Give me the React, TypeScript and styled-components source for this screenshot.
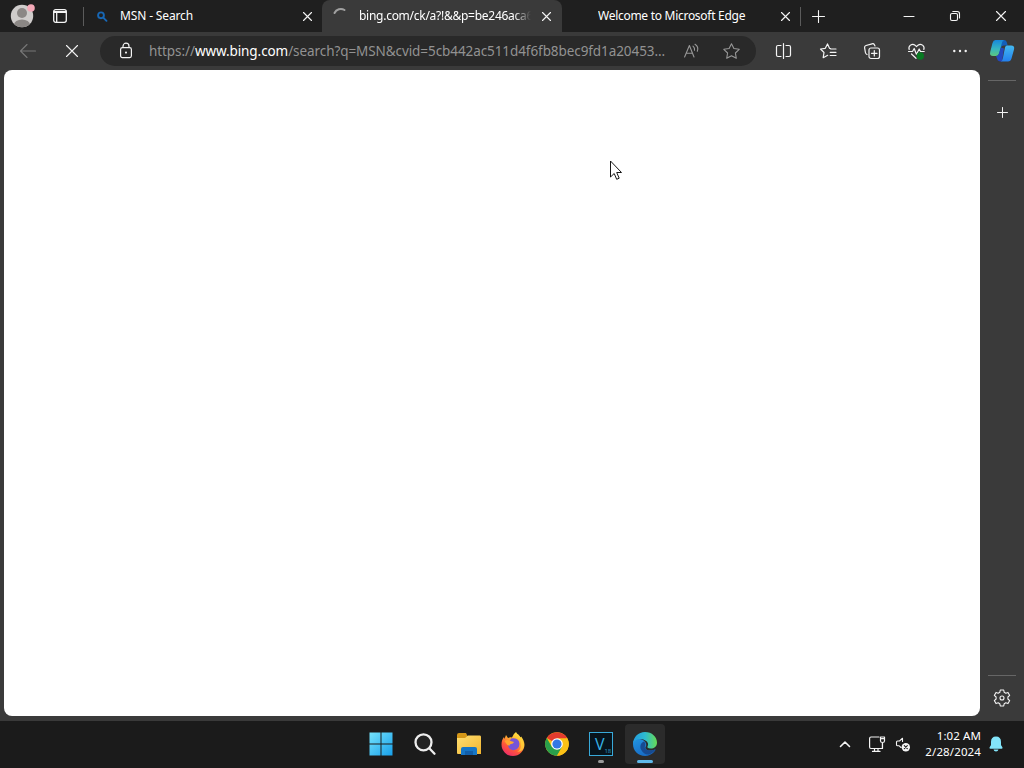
import React from "react";
import styled, { createGlobalStyle } from "styled-components";

const GlobalStyle = createGlobalStyle`
  * { box-sizing: border-box; }
  html, body { margin: 0; padding: 0; overflow: hidden; }
  body { background: #1b1b1b; font-family: "Noto Sans", "Open Sans", sans-serif; }
`;

const Desktop = styled.div`
  position: relative;
  width: 1024px;
  height: 768px;
  display: flex;
  flex-direction: column;
  overflow: hidden;
  background: #3a3a3a;
`;

const TitleBar = styled.header`
  height: 32px;
  display: flex;
  align-items: center;
  background: #1f1f1f;
`;

const Slot = styled.div<{ $w: number }>`
  width: ${(p) => p.$w}px;
  height: 100%;
  flex: none;
  display: flex;
  align-items: center;
  justify-content: center;
`;

const Icon = styled.svg<{ $color?: string; $stroke?: number }>`
  flex: none;
  display: block;
  overflow: visible;
  fill: none;
  stroke: ${(p) => p.$color ?? "#f4f4f4"};
  stroke-width: ${(p) => p.$stroke ?? 1.1};
  stroke-linecap: round;
  stroke-linejoin: round;
`;

const Logo = styled.svg`
  flex: none;
  display: block;
  overflow: visible;
`;

const Divider = styled.span`
  width: 1px;
  height: 19px;
  flex: none;
  background: #5b5b5b;
`;

const Tab = styled.div<{ $w: number; $active?: boolean }>`
  width: ${(p) => p.$w}px;
  height: 32px;
  flex: none;
  display: flex;
  align-items: center;
  background: ${(p) => (p.$active ? "#3a3a3a" : "transparent")};
  border-radius: ${(p) => (p.$active ? "8px 8px 0 0" : "0")};
`;

const TabTitle = styled.span<{ $w: number; $spacing: number; $fade?: boolean }>`
  width: ${(p) => p.$w}px;
  flex: none;
  overflow: hidden;
  white-space: nowrap;
  font-size: 12px;
  line-height: 18px;
  letter-spacing: ${(p) => p.$spacing}px;
  color: #fff;
  mask-image: ${(p) =>
    p.$fade ? "linear-gradient(90deg, #000 90%, transparent)" : "none"};
`;

const Toolbar = styled.nav`
  height: 38px;
  display: flex;
  align-items: center;
  background: #3a3a3a;
`;

const AddressBar = styled.div`
  width: 656px;
  height: 30px;
  flex: none;
  display: flex;
  align-items: center;
  padding-left: 15px;
  border-radius: 15px;
  background: #292929;
`;

const Url = styled.span`
  width: 522px;
  padding-left: 12px;
  flex: none;
  white-space: nowrap;
  font-size: 13.5px;
  line-height: 20px;
  letter-spacing: -0.08px;
  color: #929292;
`;

const Host = styled.span`
  color: #fff;
`;

const Body = styled.main`
  height: 651px;
  display: flex;
  padding: 0 0 5px 4px;
`;

const Page = styled.section`
  width: 976px;
  height: 646px;
  border-radius: 8px;
  background: #fff;
`;

const Sidebar = styled.aside`
  width: 44px;
  display: flex;
  flex-direction: column;
  align-items: center;
  padding-top: 10px;
`;

const Rule = styled.span`
  width: 28px;
  height: 1px;
  flex: none;
  background: #666;
`;

const SideButton = styled.div<{ $h: number; $drop?: number }>`
  height: ${(p) => p.$h}px;
  padding-top: ${(p) => p.$drop ?? 0}px;
  display: flex;
  align-items: center;
`;

const Spacer = styled.div`
  flex: 1;
`;

const Taskbar = styled.footer`
  height: 47px;
  display: flex;
  align-items: center;
  padding: 0 0 1px 359px;
  background: #1b1b1b;
`;

const TaskButton = styled.div<{ $active?: boolean }>`
  position: relative;
  width: 40px;
  height: 40px;
  margin: 0 2px;
  flex: none;
  display: flex;
  align-items: center;
  justify-content: center;
  border-radius: 4px;
  background: ${(p) => (p.$active ? "#2b2b2b" : "transparent")};
`;

const Running = styled.span<{ $active?: boolean }>`
  position: absolute;
  bottom: 1px;
  left: 50%;
  width: ${(p) => (p.$active ? 16 : 6)}px;
  height: 3px;
  border-radius: 2px;
  transform: translateX(-50%);
  background: ${(p) => (p.$active ? "#5fb9ea" : "#9a9a9a")};
`;

const Clock = styled.div`
  width: 66px;
  flex: none;
  text-align: right;
  white-space: nowrap;
  font-size: 11.5px;
  line-height: 16px;
  letter-spacing: -0.05px;
  color: #fff;
`;

const ClockLine = styled.div<{ $spacing: number }>`
  letter-spacing: ${(p) => p.$spacing}px;
`;

const Pointer = styled.svg`
  position: absolute;
  left: 610px;
  top: 160px;
`;

const Cross = ({ size, color }: { size: number; color?: string }) => (
  <Icon width={size} height={size} viewBox={`0 0 ${size} ${size}`} $color={color}>
    <path d={`M.5 .5L${size - 0.5} ${size - 0.5}M${size - 0.5} .5L.5 ${size - 0.5}`} />
  </Icon>
);

const Plus = ({ size, stroke }: { size: number; stroke?: number }) => (
  <Icon width={size} height={size} viewBox={`0 0 ${size} ${size}`} $stroke={stroke}>
    <path d={`M${size / 2} .5V${size - 0.5}M.5 ${size / 2}H${size - 0.5}`} />
  </Icon>
);

const Avatar = () => (
  <Logo width="26" height="26" viewBox="0 0 26 26">
    <clipPath id="face"><circle cx="13" cy="13" r="11.2" /></clipPath>
    <circle cx="13" cy="13" r="11.2" fill="#cfcccb" />
    <g clipPath="url(#face)" fill="#8b8785">
      <circle cx="13" cy="10" r="5" />
      <ellipse cx="13" cy="22" rx="8" ry="5.500" />
    </g>
    <circle cx="22" cy="5" r="3.8" fill="#f4a9b8" />
  </Logo>
);

const CopilotMark = () => (
  <Logo width="26" height="24" viewBox="0 0 26 24">
    <defs>
      <linearGradient id="cpA" x1="0" y1="0" x2="0" y2="1">
        <stop offset="0" stopColor="#1787dc" />
        <stop offset=".55" stopColor="#36b5c1" />
        <stop offset="1" stopColor="#5cc67d" />
      </linearGradient>
      <linearGradient id="cpB" x1="0" y1="0" x2="0" y2="1">
        <stop offset="0" stopColor="#43b9f0" />
        <stop offset="1" stopColor="#2380ee" />
      </linearGradient>
    </defs>
    <path d="M12 1h3q2 0 2.700 2l1 3.500h-4q-2 0-2.700 2L10 17l-3-7z" fill="#135fba" />
    <path d="M6.500 1H15q-1.500.5-2 2.500L10 14.500Q9.300 17 7 17H4Q.2 17 1.200 13L3.500 4q.8-3 3-3z" fill="url(#cpA)" />
    <path d="M7 17q2 0 3-2.500l2-6 3 1-2 13q-4 0-4.600-2z" fill="#2448bd" />
    <path d="M18 6.500h4q4 0 3 4l-2.500 9q-.8 3-3.500 3h-7q1.200-.7 1.800-3L16 8.500q.5-2 2-2z" fill="url(#cpB)" />
  </Logo>
);

const WindowsMark = () => (
  <Logo width="24" height="24" viewBox="0 0 24 24">
    <defs>
      <linearGradient id="win" gradientUnits="userSpaceOnUse" x1="0" y1="0" x2="24" y2="24">
        <stop stopColor="#78e5fc" />
        <stop offset="1" stopColor="#159eea" />
      </linearGradient>
    </defs>
    <path d="M.5.5h11v11H.5zM12.500.5h11v11h-11zM.5 12.500h11v11H.5zM12.500 12.500h11v11h-11z" fill="url(#win)" />
  </Logo>
);

const FolderMark = () => (
  <Logo width="24" height="24" viewBox="0 0 24 24">
    <defs>
      <linearGradient id="fold" x2="1" y2="1">
        <stop stopColor="#ffdf72" />
        <stop offset="1" stopColor="#f2b52f" />
      </linearGradient>
    </defs>
    <path d="M0 3q0-2 2-2h7l1.500 3H20v4H0z" fill="#d59717" />
    <path d="M0 6h8l3-2.500h12q1 0 1 1.500V22H1q-1 0-1-1z" fill="url(#fold)" />
    <path d="M4 23v-6q0-2 2-2h12q2 0 2 2v6z" fill="#1676c6" />
    <path d="M8 19h8v4H8z" fill="#125ea8" />
  </Logo>
);

const FirefoxMark = () => (
  <Logo width="24" height="24" viewBox="0 0 24 24">
    <defs>
      <linearGradient id="fox" x1=".8" y1="0" x2=".25" y2="1">
        <stop stopColor="#fff04a" />
        <stop offset=".35" stopColor="#ffb32e" />
        <stop offset=".67" stopColor="#ff5839" />
        <stop offset="1" stopColor="#ea286d" />
      </linearGradient>
    </defs>
    <path d="M15 0c1 2 3.500 3.500 4.500 5.500l.7-1C22 7 23.500 10 23.500 13A11.500 11.500 0 0 1 12 24 11.500 11.500 0 0 1 .5 12.500C.5 9 1.500 7 3 5l.5 2L5 3l2 3q2-1 4-.5Q12 2 15 0z" fill="url(#fox)" />
    <path d="M10 6.500q6-1 8 3 1.500 5-2 7.500-4 2.500-7.500-.5-2.500-3-.5-6z" fill="#7654d8" />
    <path d="M3.500 9q3-2 6 0l3.500 1q-.7 2-3 2-1.500.4-1.500 1.700-2.500-.4-3.500-2.500z" fill="#ffa62e" />
    <path d="M15 2q6 4 5 12-.5 4-4 6 8-1 7-8l-3-6-3-4z" fill="#ffd33a" opacity=".7" />
  </Logo>
);

const ChromeMark = () => (
  <Logo width="24" height="24" viewBox="0 0 24 24">
    <circle cx="12" cy="12" r="11.8" fill="#fbc116" />
    <path d="M12 12L1.800 6A11.800 11.800 0 0 1 22.200 6z" fill="#e33b2e" />
    <path d="M1.800 6A11.800 11.800 0 0 0 12 23.800L17.100 15 12 12 6.900 15z" fill="#29a04b" />
    <path d="M12 6.200H22.300A11.800 11.800 0 0 1 12 23.800L17.100 15z" fill="#fbc116" />
    <circle cx="12" cy="12" r="5.8" fill="#fff" />
    <circle cx="12" cy="12" r="4.6" fill="#3478e5" />
  </Logo>
);

const VegasTile = styled.div`
  width: 24px;
  height: 24px;
  display: flex;
  align-items: flex-end;
  padding-left: 5px;
  border: 1.5px solid #38a9d9;
  background: #08141c;
  color: #37b5e8;
  font-family: "Open Sans", sans-serif;
  font-size: 16px;
  line-height: 22px;
`;

const VegasVersion = styled.span`
  font-size: 6px;
  line-height: 8px;
  letter-spacing: -0.3px;
  color: #299fcd;
`;

const EdgeMark = () => (
  <Logo width="24" height="24" viewBox="0 0 24 24">
    <defs>
      <linearGradient id="edTop" x1="0" y1=".5" x2="1" y2=".5">
        <stop stopColor="#239bdf" />
        <stop offset=".5" stopColor="#2dbbd0" />
        <stop offset="1" stopColor="#67db53" />
      </linearGradient>
      <linearGradient id="edBase" x1="0" y1="0" x2=".6" y2="1">
        <stop stopColor="#2294e0" />
        <stop offset="1" stopColor="#176ac4" />
      </linearGradient>
    </defs>
    <path d="M0 12C0 6 5 6 9 7.500c4 2 5 5 3.800 7-1.200 2 .8 4 4 4 3 0 5-1.400 5.600-1 .5.4-3.400 6.500-10.200 6.500C5 24 0 18.600 0 12z" fill="url(#edBase)" />
    <path d="M11 9.500c-3 1-4.500 4.500-3 8 1.500 3.500 5 5.500 8 5 3-1 6.500-4 6.400-5-.3-.5-2.400 1.100-5.600 1.100-4 0-6-2.500-4.600-5Q13 11 11 9.500z" fill="#174a91" />
    <path d="M0 11.500C.5 5 5.200 0 12 0c7 0 12 5 12 10.500 0 4-3 6-6.200 6-3 0-4-1-3.200-2.200C16.500 11 13 7.500 8 7 4 6.700 1 8.500 0 11.500z" fill="url(#edTop)" />
  </Logo>
);

export default function App() {
  return (
    <>
      <GlobalStyle />
      <Desktop>
        <TitleBar>
          <Slot $w={44}><Avatar /></Slot>
          <Slot $w={32}>
            <Icon width="14" height="14" viewBox="0 0 14 14" $stroke={1.3}>
              <rect x=".7" y=".7" width="12.6" height="12.6" rx="2" />
              <path d="M1 2.600H13M1 3.400H13M3.700 4V13" />
            </Icon>
          </Slot>
          <Slot $w={7} />
          <Divider />
          <Tab $w={238}>
            <Slot $w={36}>
              <Icon width="11" height="11" viewBox="0 0 11 11" $color="#1767b5" $stroke={1.9}>
                <circle cx="4" cy="4.3" r="2.9" />
                <path d="M6.500 6.800L9.500 9.800" />
              </Icon>
            </Slot>
            <TabTitle $w={178} $spacing={-0.14}>MSN - Search</TabTitle>
            <Slot $w={18}><Cross size={9} /></Slot>
          </Tab>
          <Tab $w={240} $active>
            <Slot $w={37}>
              <Icon width="14" height="14" viewBox="0 0 14 14" $color="#a0a0a0" $stroke={2}>
                <path d="M.5 4A7 7 0 0 1 10.500 1" />
              </Icon>
            </Slot>
            <TabTitle $w={172} $spacing={-0.27} $fade>bing.com/ck/a?!&amp;&amp;p=be246aca6f</TabTitle>
            <Slot $w={31}><Cross size={9} /></Slot>
          </Tab>
          <Tab $w={238}>
            <Slot $w={36} />
            <TabTitle $w={178} $spacing={-0.28}>Welcome to Microsoft Edge</TabTitle>
            <Slot $w={18}><Cross size={9} /></Slot>
          </Tab>
          <Divider />
          <Slot $w={35}><Plus size={13} /></Slot>
          <Spacer />
          <Slot $w={46}>
            <Icon width="10" height="10" viewBox="0 0 10 10"><path d="M0 5.500H10" /></Icon>
          </Slot>
          <Slot $w={46}>
            <Icon width="10" height="10" viewBox="0 0 10 10">
              <rect x=".5" y="2.5" width="7" height="7" rx="1.5" />
              <path d="M2.800.5H7.300Q9.500.5 9.500 2.700V7" />
            </Icon>
          </Slot>
          <Slot $w={46}><Cross size={10} /></Slot>
        </TitleBar>

        <Toolbar>
          <Slot $w={56}>
            <Icon width="16" height="14" viewBox="0 0 16 14" $color="#777">
              <path d="M.5 7H15.500M7 .5L.5 7 7 13.500" />
            </Icon>
          </Slot>
          <Slot $w={32}><Cross size={12} /></Slot>
          <Slot $w={12} />
          <AddressBar>
            <Slot $w={22}>
              <Icon width="12" height="16" viewBox="0 0 12 16" $stroke={1.2}>
                <rect x=".6" y="4.6" width="10.8" height="10" rx="1.8" />
                <path d="M3 4V3.200a3 3 0 0 1 6 0V4" />
                <circle cx="6" cy="9.6" r=".45" />
              </Icon>
            </Slot>
            <Url>https://<Host>www.bing.com</Host>/search?q=MSN&amp;cvid=5cb442ac511d4f6fb8bec9fd1a20453...</Url>
            <Slot $w={64}>
              <Icon width="15" height="14" viewBox="0 0 15 14" $color="#989898">
                <path d="M.6 13L5.400 1.500 10 13M2.200 9.300H8.600M9 2.200Q11 4 10.500 6.300M11 .3Q15 3 13.300 7.200" />
              </Icon>
            </Slot>
            <Slot $w={16}>
              <Icon width="17" height="16" viewBox="0 0 17 16" $color="#989898">
                <path d="M8.500.7L10.900 5.500 16.200 6.300 12.400 10 13.300 15.300 8.500 12.800 3.700 15.300 4.600 10 .8 6.300 6.100 5.500z" />
              </Icon>
            </Slot>
          </AddressBar>
          <Slot $w={5} />
          <Slot $w={45}>
            <Icon width="16" height="16" viewBox="0 0 16 16" $stroke={1.2}>
              <path d="M5 2.500H2Q.5 2.500.5 4V12Q.5 13.500 2 13.500H5M10 2.500H13Q14.500 2.500 14.500 4V12Q14.500 13.500 13 13.500H10M7.500 .5V15.500" />
            </Icon>
          </Slot>
          <Slot $w={44}>
            <Icon width="17" height="16" viewBox="0 0 17 16" $stroke={1.2}>
              <path d="M10.500 5.500L9.500 5.300 7.500.9 5.300 5.300.5 6 4 9.500 3.200 14.700 7.700 12.300M10.700 6H16M10.200 9.300H16M10.200 12.500H16" />
            </Icon>
          </Slot>
          <Slot $w={44}>
            <Icon width="16" height="16" viewBox="0 0 16 16" $stroke={1.2}>
              <rect x="5" y="5" width="10.5" height="10.5" rx="2" />
              <path d="M10.300 7.500V13M7.500 10.300H13M3 11.500Q1.700 11 1.400 9.500L.6 4.800Q.4 3 2 2.500L8 .8Q9.700.4 10.400 1.700L11 3" />
            </Icon>
          </Slot>
          <Slot $w={44}>
            <Icon width="17" height="15" viewBox="0 0 17 15" $stroke={1.2}>
              <path d="M1.200 5.500C-.1 2 4-1.200 7 1.200L8.500 2.700 10 1.200C13-1.200 17.100 2 15.800 5.500M.5 7.500H4.500L6.200 4.500 8.400 10.200 11.200 5 12.500 7.500H16.200M3.500 10L8 14.300" />
              <circle cx="12.3" cy="12" r="3.7" fill="#087a22" stroke="none" />
            </Icon>
          </Slot>
          <Slot $w={44}>
            <Icon width="14" height="4" viewBox="0 0 14 4" $color="none">
              <g fill="#f4f4f4"><circle cx="1.3" cy="2" r="1.2" /><circle cx="7" cy="2" r="1.2" /><circle cx="12.7" cy="2" r="1.2" /></g>
            </Icon>
          </Slot>
          <Spacer />
          <Slot $w={40}><CopilotMark /></Slot>
          <Slot $w={2} />
        </Toolbar>

        <Body>
          <Page />
          <Sidebar>
            <Rule />
            <SideButton $h={63}><Plus size={11} stroke={1} /></SideButton>
            <Spacer />
            <Rule />
            <SideButton $h={40} $drop={4}>
              <Icon width="18" height="18" viewBox="0 0 18 18" $stroke={1.1}>
                <path d="M7.300 1h3.400l.5 2.300 1.600.9 2.200-.8 1.700 3-1.800 1.600v2l1.800 1.600-1.700 3-2.200-.8-1.600.9-.5 2.300H7.300l-.5-2.300-1.600-.9-2.200.8-1.700-3L3.100 10V8L1.300 6.400l1.700-3 2.200.8 1.600-.9z" />
                <circle cx="9" cy="9" r="2" />
              </Icon>
            </SideButton>
          </Sidebar>
        </Body>

        <Taskbar>
          <TaskButton><WindowsMark /></TaskButton>
          <TaskButton>
            <Icon width="22" height="22" viewBox="0 0 22 22" $color="#ededed" $stroke={2.3}>
              <circle cx="9.5" cy="9.3" r="8" fill="#232323" />
              <path d="M15.500 15.500L20.500 20.700" />
            </Icon>
          </TaskButton>
          <TaskButton><FolderMark /></TaskButton>
          <TaskButton><FirefoxMark /></TaskButton>
          <TaskButton><ChromeMark /></TaskButton>
          <TaskButton>
            <VegasTile>V<VegasVersion>18</VegasVersion></VegasTile>
            <Running />
          </TaskButton>
          <TaskButton $active><EdgeMark /><Running $active /></TaskButton>
          <Spacer />
          <Slot $w={24}>
            <Icon width="10" height="6" viewBox="0 0 10 6" $stroke={1.6}><path d="M.5 5.500L5 1 9.500 5.500" /></Icon>
          </Slot>
          <Slot $w={40}>
            <Icon width="16" height="16" viewBox="0 0 16 16" $stroke={1.2}>
              <path d="M10 1H2Q.6 1 .6 2.400V11Q.6 12.500 2 12.500H13.400V7M5.500 12.500V15.300M9 12.500V15.300M3.500 15.400H11M11.500 1H15.500V5Q15.500 6.500 13.500 6.500T11.500 5zM13.500 6.500V12.500M12.500 2.700H14.500" />
            </Icon>
          </Slot>
          <Slot $w={12}>
            <Icon width="14" height="15" viewBox="0 0 14 15" $stroke={1.1}>
              <path d="M6.500 4.500V1.200L3.500 4H1.500Q.5 4 .5 5V7.800Q.5 8.800 1.500 8.800H3.200L5 10.500" />
              <circle cx="9.800" cy="10.200" r="4.200" fill="#f4f4f4" stroke="none" />
              <path d="M8.300 8.700L11.300 11.700M11.300 8.700L8.300 11.700" stroke="#1b1b1b" />
            </Icon>
          </Slot>
          <Slot $w={6} />
          <Clock>
            <ClockLine $spacing={0.1}>1:02 AM</ClockLine>
            <ClockLine $spacing={0.12}>2/28/2024</ClockLine>
          </Clock>
          <Slot $w={29}>
            <Logo width="14" height="16" viewBox="0 0 14 16">
              <path d="M7 .5Q12 .5 12 6V9L13.500 11.500Q13.700 12.700 12.500 12.700H1.500Q.3 12.700.5 11.500L2 9V6Q2 .5 7 .5zM4.500 13.500H9.500Q9 15.500 7 15.500T4.500 13.500z" fill="#83e5fa" />
            </Logo>
          </Slot>
          <Slot $w={14} />
        </Taskbar>

        <Pointer width="13" height="21" viewBox="0 0 13 21">
          <path d="M.5 1V17L4.200 13.500 6.700 19.300 9.200 18.200 6.700 12.500H11.500z" fill="#fff" stroke="#161616" strokeWidth="1" />
        </Pointer>
      </Desktop>
    </>
  );
}
